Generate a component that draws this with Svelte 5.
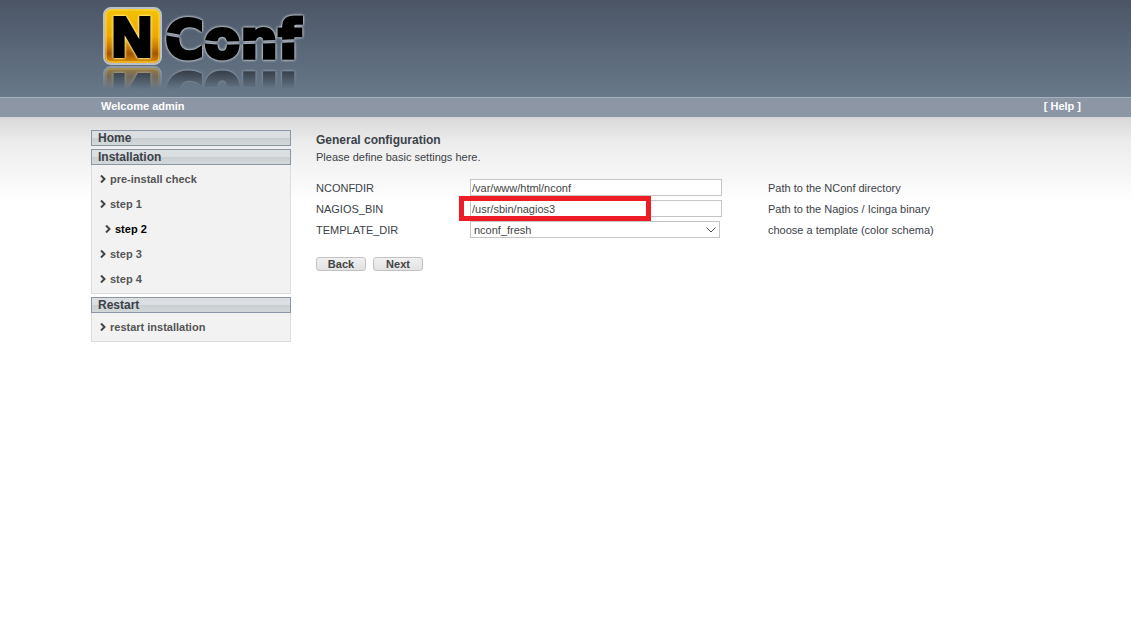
<script lang="ts">
	interface MenuItem {
		label: string;
		active?: boolean;
	}

	interface MenuSection {
		title: string;
		items: MenuItem[];
	}

	const menu: MenuSection[] = [
		{ title: 'Home', items: [] },
		{
			title: 'Installation',
			items: [
				{ label: 'pre-install check' },
				{ label: 'step 1' },
				{ label: 'step 2', active: true },
				{ label: 'step 3' },
				{ label: 'step 4' },
			],
		},
		{ title: 'Restart', items: [{ label: 'restart installation' }] },
	];

	let nconfDir = $state('/var/www/html/nconf');
	let nagiosBin = $state('/usr/sbin/nagios3');
	let templateDir = $state('nconf_fresh');
</script>

<header>
	<a class="logo" href="#home" aria-label="NConf">
		<svg width="210" height="96" viewBox="0 0 210 96" aria-hidden="true">
			<defs>
				<linearGradient id="gold" x1="0" y1="0" x2="0" y2="1">
					<stop offset="0" stop-color="#f3c400" />
					<stop offset="0.5" stop-color="#efa800" />
					<stop offset="0.7" stop-color="#c87800" />
					<stop offset="0.82" stop-color="#a05400" />
					<stop offset="1" stop-color="#e59a00" />
				</linearGradient>
				<linearGradient id="fade" x1="0" y1="0" x2="0" y2="1">
					<stop offset="0" stop-color="#fff" stop-opacity="0.55" />
					<stop offset="1" stop-color="#fff" stop-opacity="0" />
				</linearGradient>
				<mask id="slice" maskUnits="userSpaceOnUse" x="0" y="0" width="210" height="96">
					<rect width="210" height="96" fill="#fff" />
					<path d="M62 33 L84 37 Q106 44 130 43 Q170 42 210 40" fill="none" stroke="#000" stroke-width="3" />
				</mask>
				<mask id="mirror" maskUnits="userSpaceOnUse" x="0" y="66" width="210" height="30">
					<rect y="66" width="210" height="23" fill="url(#fade)" />
				</mask>
			</defs>
			<g id="mark">
				<rect x="4" y="8" width="57" height="56" rx="7" fill="url(#gold)" stroke="#b9c0ca" stroke-width="2" />
				<rect x="6" y="10" width="53" height="52" rx="5" fill="none" stroke="#ffd84a" stroke-width="1" />
				<g class="glow">
					<text class="initial" x="32" y="56" text-anchor="middle">N</text>
				</g>
				<g class="halo">
					<g mask="url(#slice)">
						<text class="word" x="65" y="58">Conf</text>
					</g>
				</g>
			</g>
			<g mask="url(#mirror)">
				<use href="#mark" transform="matrix(1 0 0 -1 0 131)" />
			</g>
		</svg>
	</a>
</header>

<nav class="topbar">
	<span>Welcome admin</span>
	<a href="#help">[ Help ]</a>
</nav>

<div class="page">
	<aside>
		{#each menu as section (section.title)}
			<section>
				<h2><a href="#{section.title}">{section.title}</a></h2>
				{#if section.items.length}
					<ul>
						{#each section.items as item (item.label)}
							<li class:active={item.active}>
								<svg width="6" height="8" viewBox="0 0 6 8" aria-hidden="true">
									<path d="M1 0.5 L4.5 4 L1 7.5" fill="none" stroke="#444" stroke-width="2" />
								</svg>
								<a href="#{item.label}">{item.label}</a>
							</li>
						{/each}
					</ul>
				{/if}
			</section>
		{/each}
	</aside>

	<main>
		<h1>General configuration</h1>
		<p>Please define basic settings here.</p>

		<form onsubmit={(e) => e.preventDefault()}>
			<div class="row">
				<label for="nconfdir">NCONFDIR</label>
				<div class="field">
					<input id="nconfdir" type="text" bind:value={nconfDir} />
				</div>
				<span>Path to the NConf directory</span>
			</div>
			<div class="row">
				<label for="nagiosbin">NAGIOS_BIN</label>
				<div class="field">
					<input id="nagiosbin" type="text" bind:value={nagiosBin} />
					<div class="highlight"></div>
				</div>
				<span>Path to the Nagios / Icinga binary</span>
			</div>
			<div class="row">
				<label for="templatedir">TEMPLATE_DIR</label>
				<div class="field">
					<select id="templatedir" bind:value={templateDir}>
						<option value="nconf_fresh">nconf_fresh</option>
					</select>
					<svg class="chevron" width="10" height="6" viewBox="0 0 10 6" aria-hidden="true">
						<path d="M0.5 0.5 L5 5 L9.5 0.5" fill="none" stroke="#555" />
					</svg>
				</div>
				<span>choose a template (color schema)</span>
			</div>
			<div class="buttons">
				<button type="button">Back</button>
				<button type="submit">Next</button>
			</div>
		</form>
	</main>
</div>

<style>
	:global(body) {
		font-family: 'Liberation Sans', Arial, sans-serif;
		font-size: 11px;
		color: #3b4248;
		background: #fff;
	}

	a {
		color: inherit;
		text-decoration: none;
	}

	header {
		height: 97px;
		padding-left: 100px;
		background: linear-gradient(#4b5566, #68798a);
	}

	.logo,
	.logo svg {
		display: block;
		width: 210px;
	}

	.initial {
		font: bold 56px 'Liberation Sans', Arial, sans-serif;
		fill: #000;
		stroke: #000;
		stroke-width: 4px;
	}

	.word {
		font: bold 53px 'DejaVu Sans', sans-serif;
		fill: #000;
		stroke: #000;
		stroke-width: 3px;
	}

	.glow {
		filter: drop-shadow(0 0 1px #fff3a8) drop-shadow(0 0 1px #ffe680);
	}

	.halo {
		filter: drop-shadow(0 0 1px #d5dae0) drop-shadow(0 0 1px #b5bcc6);
	}

	.topbar {
		display: flex;
		justify-content: space-between;
		padding: 0 50px 0 101px;
		border-top: 1px solid #a7b1be;
		background: #8d96a5;
		color: #fff;
		font-weight: bold;
		height: 19px;
	}

	.topbar span,
	.topbar a {
		line-height: 17px;
	}

	.page {
		display: flex;
		gap: 25px;
		padding: 13px 50px 40px 91px;
		background: linear-gradient(#d8d8d8, #ececec 25px, #fff 85px);
	}

	aside {
		flex: 0 0 200px;
		display: flex;
		flex-direction: column;
		gap: 3px;
	}

	h2 {
		margin: 0;
		padding-left: 6px;
		border: 1px solid #8a95a5;
		background: linear-gradient(#dcdfe1 50%, #c9cfd1 50%, #d3d9d9);
		font-size: 12px;
		line-height: 14px;
	}

	ul {
		margin: 0;
		padding: 2px 8px 1px;
		border: 1px solid #dcdcdc;
		border-top: 0;
		background: #f2f2f2;
		list-style: none;
	}

	li {
		display: flex;
		align-items: center;
		gap: 4px;
		padding-bottom: 1px;
		line-height: 24px;
		font-weight: bold;
		color: #555;
	}

	li.active {
		padding-left: 5px;
		color: #000;
	}

	main {
		flex: 1;
		min-width: 0;
	}

	h1 {
		margin: 2px 0 0;
		font-size: 12px;
		line-height: 16px;
	}

	p {
		margin: 0;
		line-height: 18px;
	}

	form {
		margin-top: 11px;
	}

	.row {
		display: grid;
		grid-template-columns: 154px 252px 1fr;
		align-items: center;
		height: 21px;
	}

	.row > span {
		padding-left: 46px;
	}

	.field {
		position: relative;
		display: flex;
	}

	input,
	select {
		box-sizing: border-box;
		width: 252px;
		height: 17px;
		margin: 0;
		padding: 0 1px;
		border: 1px solid #c5c5c5;
		border-radius: 0;
		background: #fff;
		color: #444;
		font: inherit;
	}

	select {
		width: 250px;
		padding: 0 3px;
		appearance: none;
	}

	.chevron {
		position: absolute;
		top: 6px;
		right: 6px;
	}

	.highlight {
		position: absolute;
		top: -4px;
		left: -11px;
		width: 182px;
		height: 15px;
		border: 5px solid #ee1c24;
		pointer-events: none;
	}

	.buttons {
		display: flex;
		gap: 7px;
		margin-top: 17px;
	}

	button {
		width: 50px;
		height: 14px;
		padding: 0;
		border: 1px solid #c2c2c2;
		border-radius: 3px;
		background: linear-gradient(#f0f0f0, #e2e2e2);
		color: #444;
		font: bold 11px/12px 'Liberation Sans', Arial, sans-serif;
	}
</style>
